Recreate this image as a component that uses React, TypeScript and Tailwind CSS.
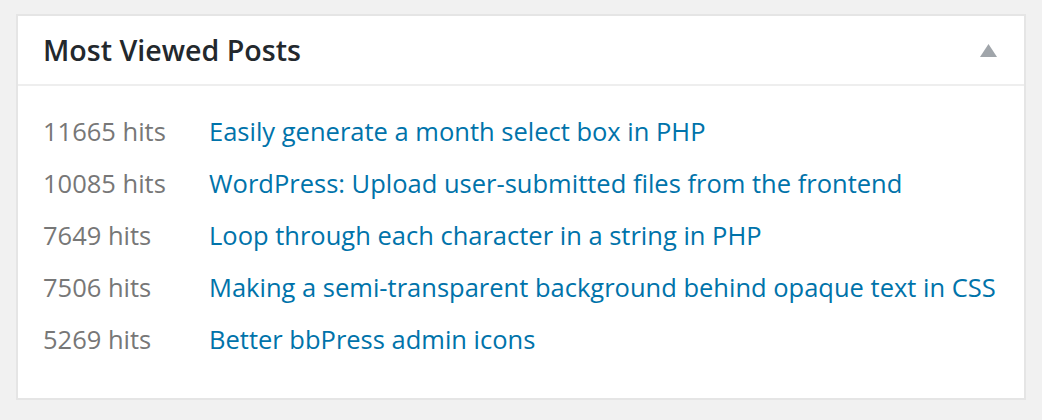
import React from 'react';

const posts = [
  { hits: 11665, title: 'Easily generate a month select box in PHP' },
  { hits: 10085, title: 'WordPress: Upload user-submitted files from the frontend' },
  { hits: 7649, title: 'Loop through each character in a string in PHP' },
  { hits: 7506, title: 'Making a semi-transparent background behind opaque text in CSS' },
  { hits: 5269, title: 'Better bbPress admin icons' },
];

const App: React.FC = () => {
  return (
    <div className="min-h-[420px] w-full bg-[#f1f1f1] pt-[14px] px-4 pb-[21px] font-['Open_Sans',sans-serif]">
      {/* Widget */}
      <div className="bg-white border-2 border-[#e5e5e5]">
        <div className="h-[70px] flex items-center justify-between pl-[25px] pr-[27px] border-b-2 border-[#eeeeee]">
          <h2 className="text-[28.6px] font-semibold text-[#23282d]">Most Viewed Posts</h2>
          <svg width="17" height="13" viewBox="0 0 17 13" className="mt-[1px]">
            <polygon points="8.5,0 17,13 0,13" fill="#a0a5aa" />
          </svg>
        </div>

        <ul className="pt-[27px] pb-[41px] pl-[25px]">
          {posts.map((p) => (
            <li key={p.hits} className="flex text-[25.5px] leading-[36px] mb-4 last:mb-0">
              <span className="w-[166px] shrink-0 text-[#777777]">{p.hits} hits</span>
              <a href="#" className="text-[#0073aa]">{p.title}</a>
            </li>
          ))}
        </ul>
      </div>
    </div>
  );
};

export default App;
